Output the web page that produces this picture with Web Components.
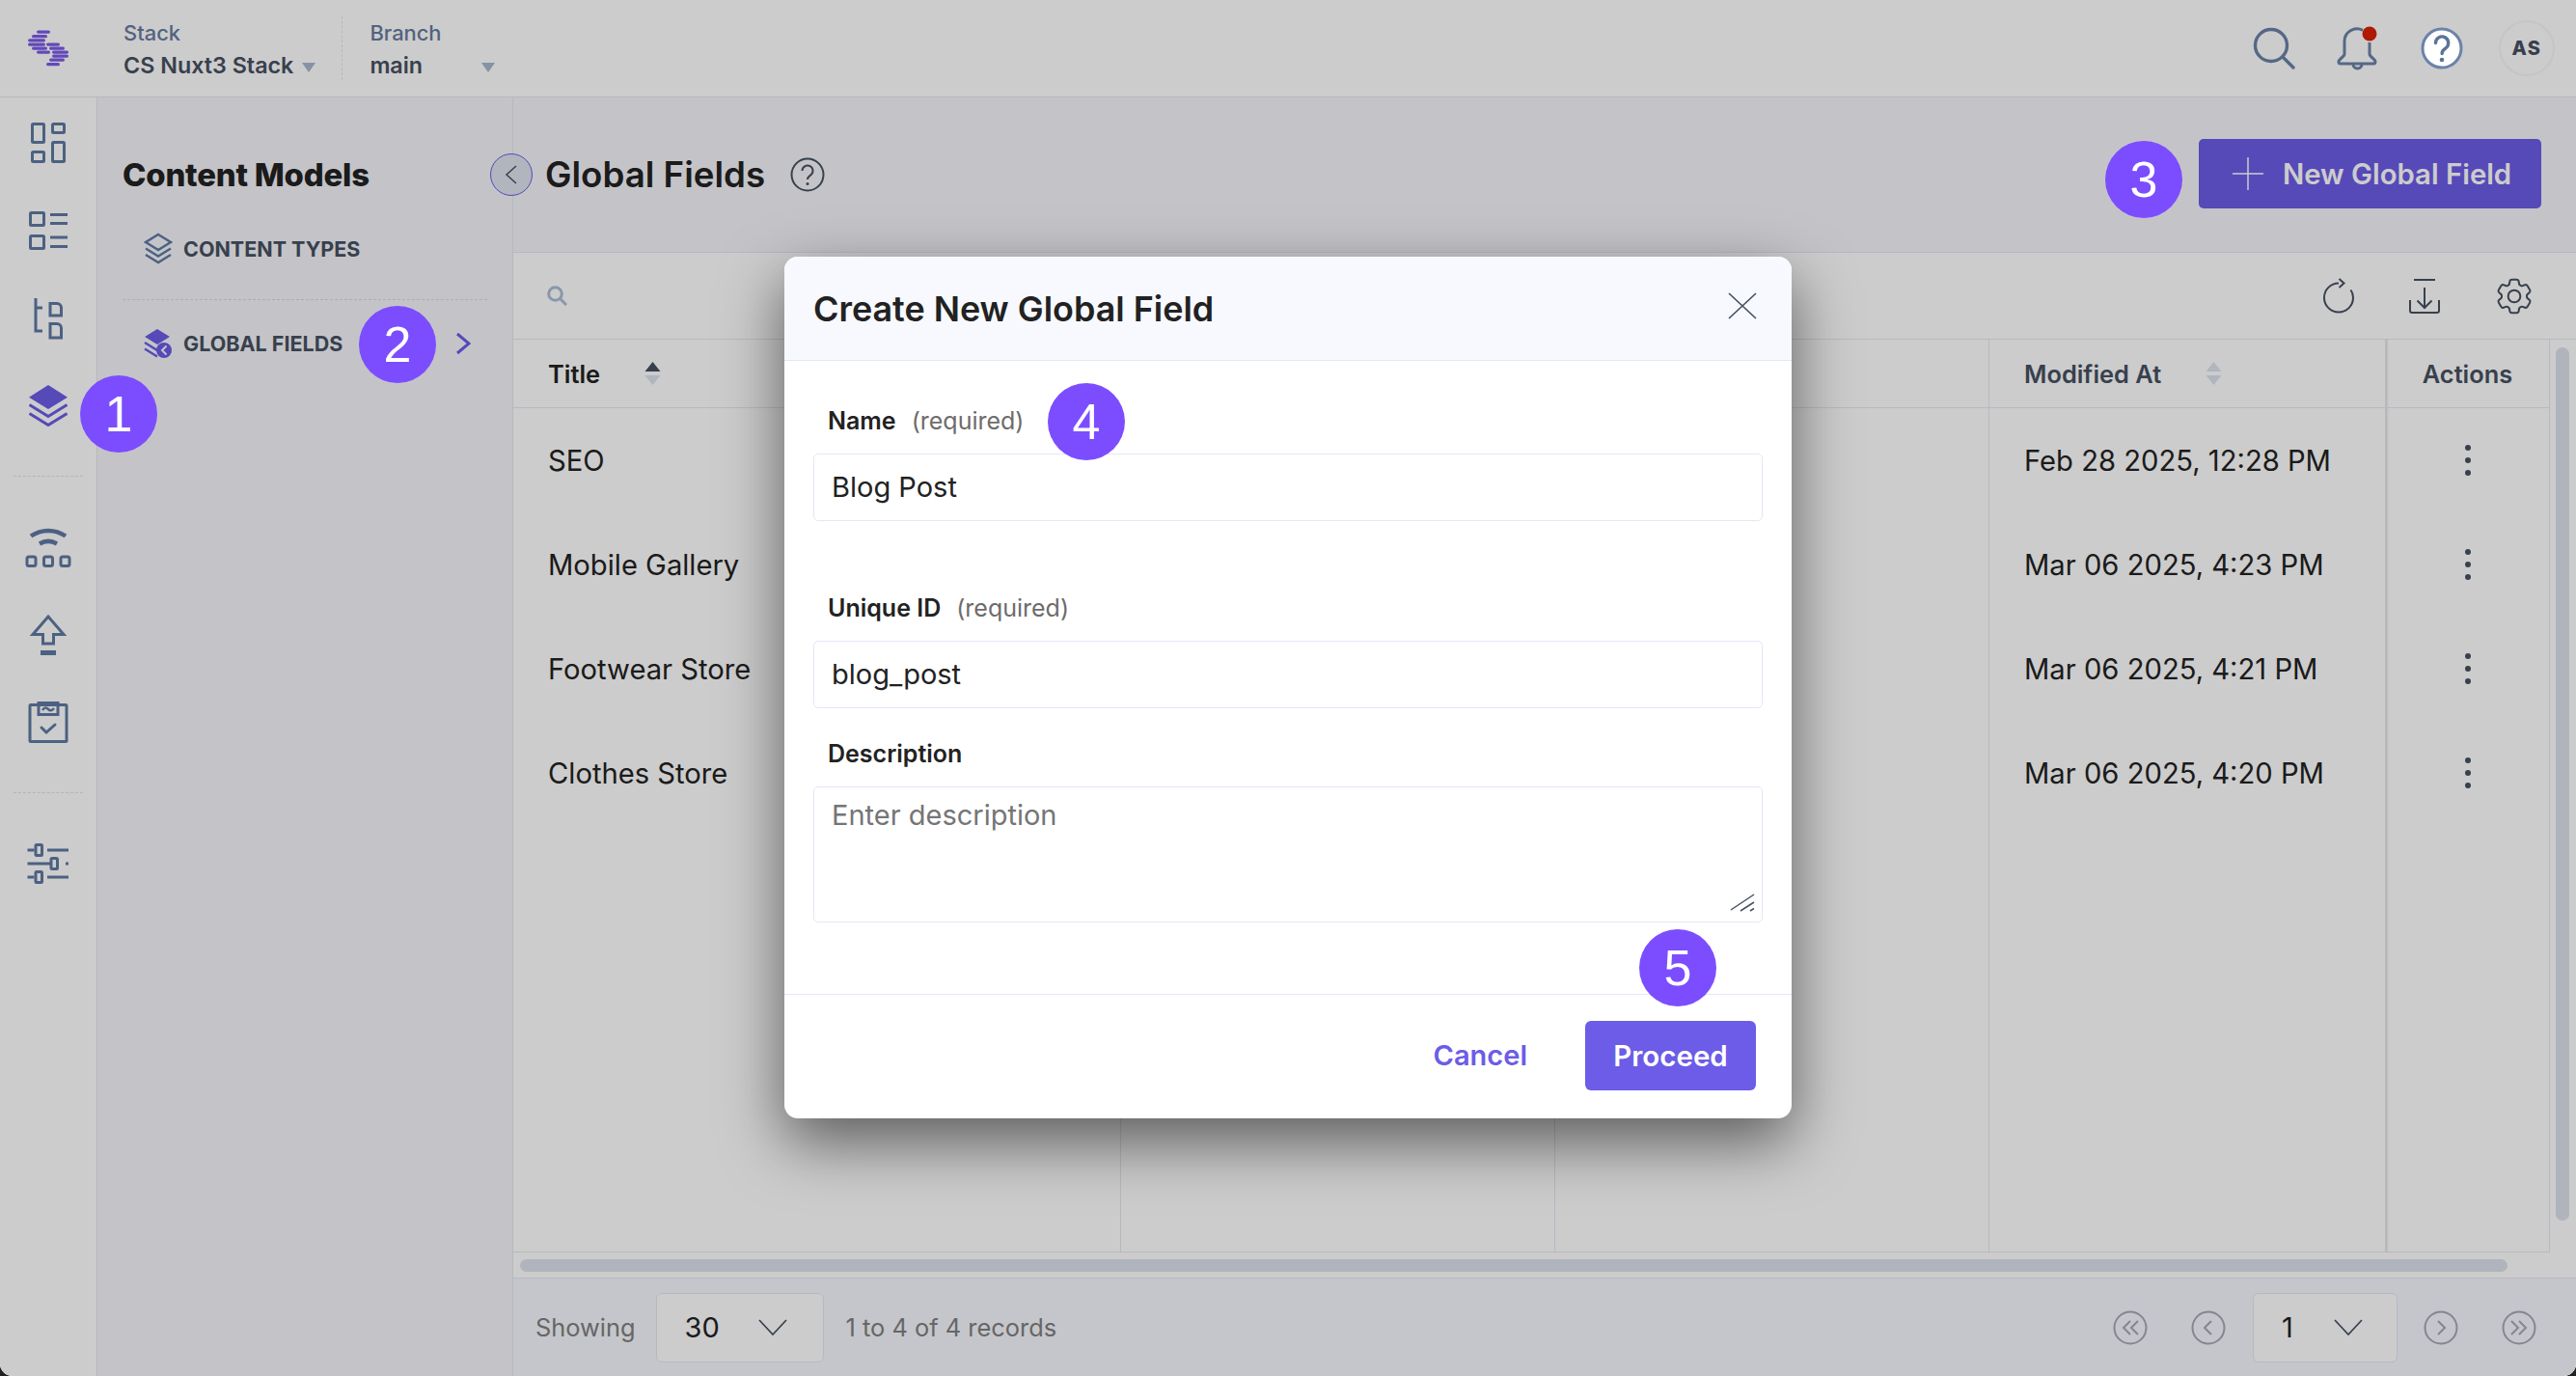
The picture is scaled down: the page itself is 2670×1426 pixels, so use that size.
<!DOCTYPE html>
<html lang="en">
<head>
<meta charset="utf-8">
<title>Global Fields</title>
<style>
  html, body { margin: 0; height: 100%; background: #222; overflow: hidden; }
  body { font-family: Inter, "Liberation Sans", sans-serif; }
</style>
</head>
<body>
<app-shell>
  <top-bar slot="top"></top-bar>
  <side-rail slot="rail"></side-rail>
  <models-panel slot="panel"></models-panel>
  <main-view slot="main">
    <page-header></page-header>
    <table-toolbar></table-toolbar>
    <data-table></data-table>
    <table-footer></table-footer>
  </main-view>
  <create-modal slot="modal">
    <form-field label="Name" hint="(required)" style="margin-top:47px">Blog Post</form-field>
    <form-field label="Unique ID" hint="(required)" style="margin-top:75px">blog_post</form-field>
    <form-field label="Description" area placeholder style="margin-top:32px">Enter description</form-field>
  </create-modal>
  <step-badge slot="badges" style="left:83px;top:389px">1</step-badge>
  <step-badge slot="badges" style="left:372px;top:317px">2</step-badge>
  <step-badge slot="badges" style="left:2182px;top:146px">3</step-badge>
  <step-badge slot="badges" style="left:1086px;top:397px">4</step-badge>
  <step-badge slot="badges" style="left:1699px;top:963px">5</step-badge>
</app-shell>

<script>
function fill(el, html) {
    const template = document.createElement('template');
    template.innerHTML = html;
    el.shadowRoot.innerHTML = '';
    el.shadowRoot.appendChild(template.content.cloneNode(true));
}

const GEAR = 'M9.594 3.94c.09-.542.56-.94 1.11-.94h2.593c.55 0 1.02.398 1.11.94l.213 1.281c.063.374.313.686.645.87.074.04.147.083.22.127.325.196.72.257 1.075.124l1.217-.456a1.125 1.125 0 0 1 1.37.49l1.296 2.247a1.125 1.125 0 0 1-.26 1.431l-1.003.827c-.293.241-.438.613-.43.992a7.723 7.723 0 0 1 0 .255c-.008.378.137.75.43.991l1.004.827c.424.35.534.955.26 1.43l-1.298 2.247a1.125 1.125 0 0 1-1.369.491l-1.217-.456c-.355-.133-.75-.072-1.076.124a6.47 6.47 0 0 1-.22.128c-.331.183-.581.495-.644.869l-.213 1.281c-.09.543-.56.94-1.11.94h-2.594c-.55 0-1.019-.398-1.11-.94l-.213-1.281c-.062-.374-.312-.686-.644-.87a6.52 6.52 0 0 1-.22-.127c-.325-.196-.72-.257-1.076-.124l-1.217.456a1.125 1.125 0 0 1-1.369-.49l-1.297-2.247a1.125 1.125 0 0 1 .26-1.431l1.004-.827c.292-.24.437-.613.43-.991a6.932 6.932 0 0 1 0-.255c.007-.38-.138-.751-.43-.992l-1.004-.827a1.125 1.125 0 0 1-.26-1.43l1.297-2.247a1.125 1.125 0 0 1 1.37-.491l1.216.456c.356.133.751.072 1.076-.124.072-.044.146-.086.22-.128.332-.183.582-.495.644-.869l.214-1.28Z';

class AppShell extends HTMLElement {
    constructor() {
        super();
        this.attachShadow({ mode: 'open' });
    }

    connectedCallback() {
        fill(this, `
            <style>
                :host {
                    display: grid;
                    grid-template-columns: 101px 431px 1fr;
                    grid-template-rows: 101px 1fr;
                    position: relative;
                    width: 100vw;
                    height: 100vh;
                    background: #fff;
                    border-radius: 0 0 13px 13px;
                    overflow: hidden;
                    color: #222;
                    font-family: Inter, "Liberation Sans", sans-serif;
                }
                .top { grid-column: 1 / 4; display: flex; min-width: 0; }
                .col { display: flex; min-width: 0; min-height: 0; }
            </style>
            <div class="top"><slot name="top"></slot></div>
            <div class="col"><slot name="rail"></slot></div>
            <div class="col"><slot name="panel"></slot></div>
            <div class="col"><slot name="main"></slot></div>
            <slot name="modal"></slot>
            <slot name="badges"></slot>
        `);
    }
}

class StepBadge extends HTMLElement {
    constructor() {
        super();
        this.attachShadow({ mode: 'open' });
    }

    connectedCallback() {
        fill(this, `
            <style>
                :host {
                    position: absolute;
                    z-index: 20;
                    display: flex;
                    align-items: center;
                    justify-content: center;
                    width: 80px;
                    height: 80px;
                    border-radius: 50%;
                    background: #7c4dff;
                    color: #fff;
                    font: 400 52px "Liberation Sans", Arial, sans-serif;
                }
            </style>
            <slot></slot>
        `);
    }
}

class TopBar extends HTMLElement {
    constructor() {
        super();
        this.attachShadow({ mode: 'open' });
    }

    connectedCallback() {
        const bars = [[38, 33, 14], [33, 37.6, 16], [29, 41.7, 18], [29, 46, 18], [48, 46, 14], [33, 50, 16], [51, 50, 16],
            [38, 54, 14], [54, 54, 17], [54, 58, 17], [51, 62, 16], [48, 66.5, 14]];
        fill(this, `
            <style>
                :host {
                    display: flex;
                    flex: 1;
                    align-items: center;
                    box-sizing: border-box;
                    height: 101px;
                    border-bottom: 1px solid #e3e8f1;
                    background: #fff;
                    font-family: Inter, "Liberation Sans", sans-serif;
                }
                .logo { width: 128px; height: 100px; flex: none; }
                .picker { display: flex; flex-direction: column; gap: 9px; padding-top: 3px; }
                .picker small { font-size: 21.9px; font-weight: 500; line-height: 24px; color: #677ba0; }
                .picker b { display: flex; align-items: center; font-size: 23.3px; font-weight: 600; line-height: 26px; color: #475161; }
                .caret { width: 0; height: 0; margin-top: 3px; border: 7px solid transparent; border-top: 10px solid #a9b8cd; border-bottom: 0; }
                .stack .caret { margin-left: 9px; }
                .branch b { width: 130px; justify-content: space-between; }
                .sep { width: 0; height: 66px; margin: 0 28px 0 27px; border-left: 1px dashed #e3e8f1; }
                .right { display: flex; align-items: center; margin-left: auto; padding-right: 22px; }
                .right svg { display: block; }
                .bell { position: relative; margin-left: 42px; }
                .help { position: relative; z-index: 20; margin-left: 44px; }
                .avatar {
                    display: flex; align-items: center; justify-content: center;
                    width: 54px; height: 54px; margin-left: 37px;
                    border: 2px solid #f6f7f9; border-radius: 50%;
                    font-size: 20px; font-weight: 800; letter-spacing: 1.5px; color: #475161;
                }
            </style>
            <svg class="logo" viewBox="0 0 128 100">
                ${bars.map(([x, y, w]) => `<rect x="${x}" y="${y - 1.5}" width="${w}" height="3.2" rx="1.6" fill="#7c5ce8"/>`).join('')}
            </svg>
            <div class="picker stack"><small>Stack</small><b>CS Nuxt3 Stack<span class="caret"></span></b></div>
            <div class="sep"></div>
            <div class="picker branch"><small>Branch</small><b>main<span class="caret"></span></b></div>
            <div class="right">
                <svg width="44" height="44" viewBox="0 0 44 44" fill="none" stroke="#6b83a8" stroke-width="3.4" stroke-linecap="round">
                    <circle cx="19" cy="19" r="16.5"/><path d="M31 31 42 42"/>
                </svg>
                <svg class="bell" width="44" height="46" viewBox="0 0 44 46" fill="none" stroke="#6b83a8" stroke-width="3">
                    <path d="M28 4.4A13 13 0 0 0 9 16v13c0 3-6 5-6 8 0 1.2 1 2 2 2h34c1 0 2-.8 2-2 0-3-6-5-6-8V17"/>
                    <path d="M18 39.5a4.5 4.5 0 0 0 9 0"/>
                    <circle cx="35" cy="8" r="7.5" fill="#dd2000" stroke="none"/>
                </svg>
                <svg class="help" width="44" height="44" viewBox="0 0 44 44">
                    <circle cx="22" cy="22" r="20" fill="#fff" stroke="#6b83a8" stroke-width="3"/>
                    <path d="M15.5 16.5a6.6 6.6 0 1 1 10.2 5.6c-2.4 1.5-3.6 2.8-3.6 5.4" fill="none" stroke="#5c7398" stroke-width="3.4" stroke-linecap="round"/>
                    <circle cx="22" cy="34" r="2.3" fill="#5c7398"/>
                </svg>
                <div class="avatar">AS</div>
            </div>
        `);
    }
}

class SideRail extends HTMLElement {
    constructor() {
        super();
        this.attachShadow({ mode: 'open' });
    }

    connectedCallback() {
        const icon = (body, active) => `<div class="item"><svg width="52" height="52" viewBox="0 0 52 52" fill="none" stroke="${active ? '#6c5ce7' : '#607aa3'}" stroke-width="3">${body}</svg></div>`;
        const slider = (y, x) => `<rect x="${x}" y="${y - 5.5}" width="6.5" height="11" rx="1"/>`;
        fill(this, `
            <style>
                :host {
                    display: flex;
                    flex-direction: column;
                    flex: 1;
                    box-sizing: border-box;
                    padding-top: 1px;
                    border-right: 1px solid #e3e8f1;
                    background: #fff;
                }
                .item { display: flex; align-items: center; justify-content: center; height: 91px; flex: none; }
                .gap { display: flex; align-items: center; justify-content: center; height: 55px; flex: none; }
                .gap i { width: 72px; border-top: 1px dashed #dfe3ea; }
                svg { display: block; }
            </style>
            ${icon(`<rect x="9.5" y="6.5" width="12" height="19" rx="1"/><rect x="30.5" y="6.5" width="12" height="9" rx="1"/><rect x="9.5" y="35.5" width="12" height="10" rx="1"/><rect x="30.5" y="25.5" width="12" height="20" rx="1"/>`)}
            ${icon(`<rect x="7.5" y="7.5" width="14" height="13" rx="1"/><rect x="7.5" y="31.5" width="14" height="13" rx="1"/><path d="M28 9.5h18M28 18.5h18M28 33h18M28 42.5h18"/>`)}
            ${icon(`<path d="M13 5v34h7M13 15h7"/><path d="M28 10.5h7a4.5 4.5 0 0 1 4.5 4.5v8H28zM28 31.5h7a4.5 4.5 0 0 1 4.5 4.5v10H28z"/>`)}
            ${icon(`<path d="M26 4 46 16.7 26 29 6 16.7Z" fill="#6c5ce7" stroke="none"/><path d="M6.5 24.5 26 36.5l19.5-12M6.5 33.5 26 45.5l19.5-12"/>`, true)}
            <div class="gap"><i></i></div>
            ${icon(`<path d="M8 14.5c11-7.5 25-7.5 36 0M17 22.500c6-3.500 12-3.500 18 0" stroke-width="4.500"/><rect x="4" y="36" width="9" height="9.500" rx="2"/><rect x="21.500" y="36" width="9" height="9.500" rx="2"/><rect x="39" y="36" width="9" height="9.500" rx="2"/>`)}
            ${icon(`<path d="M26 7 10 25.500h10.500V35h11v-9.500H42Z"/><rect x="18" y="42" width="16" height="5" fill="#607aa3" stroke="none"/>`)}
            ${icon(`<rect x="7" y="7.500" width="38" height="38" rx="1"/><path d="M16 5.500h20v12H16z"/><path d="M20 13c2-3 4-3 6-1s4 1.500 6-1" stroke-width="2.500"/><path d="M19 31l5 5 9-8" stroke-linecap="round"/>`)}
            <div class="gap"><i></i></div>
            ${icon(`<path d="M4.500 12h7M25 12h22M4.500 26h24M44 26h3M4.500 40h7M25 40h22"/>${slider(12, 13)}${slider(26, 29)}${slider(40, 13)}`)}
        `);
    }
}

class ModelsPanel extends HTMLElement {
    constructor() {
        super();
        this.attachShadow({ mode: 'open' });
    }

    connectedCallback() {
        fill(this, `
            <style>
                :host {
                    display: flex;
                    flex-direction: column;
                    flex: 1;
                    position: relative;
                    box-sizing: border-box;
                    padding: 60px 26px 0 26px;
                    border-right: 1px solid #e3e8f1;
                    background: #f5f6fb;
                    font-family: Inter, "Liberation Sans", sans-serif;
                }
                h2 { margin: 0; font-size: 32.9px; line-height: 40px; font-weight: 800; letter-spacing: -.2px; color: #222; }
                .row { display: flex; align-items: center; gap: 11px; box-sizing: border-box; padding-left: 22px; font-size: 21.5px; font-weight: 700; color: #475161; }
                .first { height: 110px; padding-top: 5px; border-bottom: 1px dashed #d6dae1; }
                .second { height: 90px; }
                .chev { position: absolute; left: 371px; top: 243px; }
                .collapse {
                    position: absolute; left: 407px; top: 58px; z-index: 1;
                    display: flex; align-items: center; justify-content: center;
                    box-sizing: border-box; width: 44px; height: 44px;
                    border: 1px solid #6c5ce7; border-radius: 50%; background: #dde3ee;
                }
                svg { display: block; flex: none; }
            </style>
            <h2>Content Models</h2>
            <div class="row first">
                <svg width="30" height="34" viewBox="0 0 30 34" fill="none" stroke="#607aa3" stroke-width="2.400">
                    <path d="M15 2 28 10 15 18 2 10Z"/><path d="M2 16.500 15 24.500 28 16.500M2 23 15 31 28 23"/>
                </svg>
                CONTENT TYPES
            </div>
            <div class="row second">
                <svg width="30" height="34" viewBox="0 0 30 34" fill="none" stroke="#6c5ce7" stroke-width="2.400">
                    <path d="M14 2 27 10 14 18 1 10Z" fill="#6c5ce7" stroke="none"/><path d="M1 16 14 24 19 21M1 22.500 14 30.500"/>
                    <circle cx="21" cy="24" r="8" fill="#6c5ce7" stroke="none"/><path d="M23.500 19.500 19 24l4.500 4.500" stroke="#f5f6fb" stroke-width="2"/>
                </svg>
                GLOBAL FIELDS
            </div>
            <svg class="chev" width="16" height="24" viewBox="0 0 16 24" fill="none" stroke="#6c5ce7" stroke-width="3"><path d="M2 2 14 12 2 22"/></svg>
            <div class="collapse">
                <svg width="14" height="20" viewBox="0 0 14 20" fill="none" stroke="#475161" stroke-width="1.500"><path d="M12 1 2 10l10 9"/></svg>
            </div>
        `);
    }
}

class MainView extends HTMLElement {
    constructor() {
        super();
        this.attachShadow({ mode: 'open' });
    }

    connectedCallback() {
        fill(this, `
            <style>
                :host { display: flex; flex-direction: column; flex: 1; min-width: 0; background: #fff; }
            </style>
            <slot></slot>
        `);
    }
}

class PageHeader extends HTMLElement {
    constructor() {
        super();
        this.attachShadow({ mode: 'open' });
    }

    connectedCallback() {
        fill(this, `
            <style>
                :host {
                    display: flex;
                    align-items: center;
                    box-sizing: border-box;
                    flex: none;
                    height: 161px;
                    padding: 0 36px 0 33px;
                    border-bottom: 1px solid #e3e8f1;
                    background: #f5f6fb;
                    font-family: Inter, "Liberation Sans", sans-serif;
                }
                h1 { margin: 0; font-size: 36.7px; line-height: 42px; font-weight: 600; color: #222; }
                .help { margin-left: 26px; }
                button {
                    display: flex; align-items: center; gap: 20px;
                    box-sizing: border-box; width: 355px; height: 72px; margin: 0 0 2px auto; padding: 0 0 0 35px;
                    border: 0; border-radius: 5px; background: #6c5ce7; color: #fff;
                    font: 600 29.3px Inter, "Liberation Sans", sans-serif;
                }
                svg { display: block; flex: none; }
            </style>
            <h1>Global Fields</h1>
            <svg class="help" width="36" height="36" viewBox="0 0 36 36" fill="none" stroke="#475161" stroke-width="2">
                <circle cx="18" cy="18" r="16.500"/><path d="M12.500 14a5.500 5.500 0 1 1 8.500 4.600c-2 1.300-3 2.300-3 4.400"/><circle cx="18" cy="27.500" r="1.500" fill="#475161" stroke="none"/>
            </svg>
            <button>
                <svg width="32" height="34" viewBox="0 0 32 34" stroke="#fff" stroke-width="1.500"><path d="M16 0v34M0 17h32"/></svg>
                New Global Field
            </button>
        `);
    }
}

class TableToolbar extends HTMLElement {
    constructor() {
        super();
        this.attachShadow({ mode: 'open' });
    }

    connectedCallback() {
        fill(this, `
            <style>
                :host {
                    display: flex;
                    align-items: center;
                    box-sizing: border-box;
                    flex: none;
                    height: 90px;
                    padding: 0 44px 0 35px;
                    border-bottom: 1px solid #e3e8f1;
                    background: #fff;
                }
                .right { display: flex; align-items: center; gap: 52px; margin-left: auto; }
                svg { display: block; flex: none; }
            </style>
            <svg width="21" height="21" viewBox="0 0 21 21" fill="none" stroke="#acbdd4" stroke-width="3"><circle cx="8.500" cy="8.500" r="6.800"/><path d="M13.500 13.500 20 20"/></svg>
            <div class="right">
                <svg width="36" height="38" viewBox="0 0 36 38" fill="none" stroke="#475161" stroke-width="2">
                    <path d="M17 5.500A15 15 0 1 0 32 20.500c0-3-1-6-2.500-8"/><path d="M17.500 1l5 4.500-5 4.500"/>
                </svg>
                <svg width="36" height="38" viewBox="0 0 36 38" fill="none" stroke="#475161" stroke-width="2">
                    <path d="M7 2h22M18 10v21M10.500 23.500 18 31l7.500-7.500M3 23v11c0 1 1 2 2 2h26c1 0 2-1 2-2V23"/>
                </svg>
                <svg width="46" height="46" viewBox="0 0 24 24" fill="none" stroke="#475161" stroke-width="1.050" style="margin-right:-3px">
                    <path d="${GEAR}"/><circle cx="12" cy="12" r="3.300"/>
                </svg>
            </div>
        `);
    }
}

class SortIcon extends HTMLElement {
    constructor() {
        super();
        this.attachShadow({ mode: 'open' });
    }

    connectedCallback() {
        const up = this.hasAttribute('active') ? '#475161' : '#dde3ee';
        fill(this, `
            <style>
                :host { display: inline-block; width: 17px; height: 26px; }
                svg { display: block; }
            </style>
            <svg width="17" height="26" viewBox="0 0 17 26"><path d="M8.500 1 16.500 11H.5Z" fill="${up}"/><path d="M8.500 25 .5 15h16Z" fill="#dde3ee"/></svg>
        `);
    }
}

class DataTable extends HTMLElement {
    constructor() {
        super();
        this.attachShadow({ mode: 'open' });
    }

    connectedCallback() {
        const rows = [
            ['SEO', 'Feb 28 2025, 12:28 PM'],
            ['Mobile Gallery', 'Mar 06 2025, 4:23 PM'],
            ['Footwear Store', 'Mar 06 2025, 4:21 PM'],
            ['Clothes Store', 'Mar 06 2025, 4:20 PM']
        ];
        const kebab = '<svg width="8" height="34" viewBox="0 0 8 34" fill="#475161"><circle cx="4" cy="4" r="3"/><circle cx="4" cy="17" r="3"/><circle cx="4" cy="30" r="3"/></svg>';
        fill(this, `
            <style>
                :host {
                    display: flex;
                    flex-direction: column;
                    flex: 1;
                    min-height: 0;
                    position: relative;
                    background: #fff;
                    font-family: Inter, "Liberation Sans", sans-serif;
                }
                .wrap { flex: 1; min-height: 0; display: flex; }
                table { width: 2110px; height: 946px; border-collapse: separate; border-spacing: 0; table-layout: fixed; font-size: 29.2px; color: #222; border-right: 1px solid #e3e8f1; border-bottom: 1px solid #e3e8f1; }
                th { height: 70px; padding: 0 0 0 36px; border-bottom: 1px solid #e3e8f1; text-align: left; font-size: 25.4px; font-weight: 600; }
                td { height: 108px; padding: 0 0 0 36px; font-weight: 400; }
                th + th, td + td { border-left: 1px solid #e3e8f1; }
                .filler td { height: auto; }
                .mod { color: #475161; }
                .actions { padding: 0; text-align: center; color: #475161; background: linear-gradient(to right, rgba(0, 0, 0, .12), transparent 3px); }
                .actions svg { display: block; margin: 0 auto; }
                .label { display: flex; align-items: center; }
                sort-icon { margin-left: 46px; }
                .v { position: absolute; left: 2117px; top: 8px; width: 14px; height: 905px; border-radius: 7px; background: #dce1ec; }
                .hbar { flex: none; height: 26px; box-sizing: border-box; padding-top: 7px; }
                .hbar i { display: block; width: 2060px; height: 13px; margin-left: 7px; border-radius: 7px; background: #dce1ec; }
            </style>
            <div class="wrap">
            <table>
                <colgroup><col style="width:629px"><col style="width:450px"><col style="width:450px"><col style="width:411px"><col style="width:170px"></colgroup>
                <thead><tr>
                    <th><span class="label">Title<sort-icon active></sort-icon></span></th>
                    <th></th><th></th>
                    <th class="mod"><span class="label">Modified At<sort-icon></sort-icon></span></th>
                    <th class="actions">Actions</th>
                </tr></thead>
                <tbody>
                    ${rows.map(([name, date]) => `<tr><td>${name}</td><td></td><td></td><td>${date}</td><td class="actions">${kebab}</td></tr>`).join('')}
                    <tr class="filler"><td></td><td></td><td></td><td></td><td class="actions"></td></tr>
                </tbody>
            </table>
            </div>
            <div class="v"></div>
            <div class="hbar"><i></i></div>
        `);
    }
}

class TableFooter extends HTMLElement {
    constructor() {
        super();
        this.attachShadow({ mode: 'open' });
    }

    connectedCallback() {
        const nav = (d) => `<svg class="nav" width="36" height="36" viewBox="0 0 36 36" fill="none" stroke="#a5a8b5" stroke-width="2"><circle cx="18" cy="18" r="16.500"/><path d="${d}"/></svg>`;
        const select = (value, width, gap) => `<div class="select" style="width:${width}px"><span>${value}</span><svg width="30" height="17" viewBox="0 0 30 17" fill="none" stroke="#475161" stroke-width="1.700" style="margin-left:${gap}px"><path d="M1 1 15 16 29 1"/></svg></div>`;
        fill(this, `
            <style>
                :host {
                    display: flex;
                    align-items: center;
                    box-sizing: border-box;
                    flex: none;
                    height: 102px;
                    padding: 0 41px 0 23px;
                    border-top: 1px solid #e3e8f1;
                    background: #f7f8fe;
                    font: 400 25.4px Inter, "Liberation Sans", sans-serif;
                    color: #808080;
                }
                .select {
                    display: flex; align-items: center; box-sizing: border-box; height: 72px; padding-left: 29px;
                    border: 1px solid #e3e8f1; border-radius: 6px; background: #fff; font-size: 29px; color: #222;
                }
                .shown { margin: 0 23px 0 21px; }
                .right { display: flex; align-items: center; margin-left: auto; }
                .nav { display: block; }
                .nav + .nav { margin-left: 45px; }
                .right .select { margin: 0 27px 0 28px; }
                .last { margin-left: 45px; }
            </style>
            <span>Showing</span>
            <span class="shown">${select('30', 174, 40)}</span>
            <span>1 to 4 of 4 records</span>
            <div class="right">
                ${nav('M18 11l-7 7 7 7M26 11l-7 7 7 7')}
                ${nav('M21 11l-7 7 7 7')}
                ${select('1', 150, 42)}
                ${nav('M15 11l7 7-7 7')}
                <span class="last">${nav('M10 11l7 7-7 7M18 11l7 7-7 7')}</span>
            </div>
        `);
    }
}

class FormField extends HTMLElement {
    constructor() {
        super();
        this.attachShadow({ mode: 'open' });
    }

    connectedCallback() {
        const area = this.hasAttribute('area');
        const hint = this.getAttribute('hint');
        fill(this, `
            <style>
                :host { display: block; font-family: Inter, "Liberation Sans", sans-serif; }
                label { display: flex; gap: 16px; padding-left: 15px; margin-bottom: 19px; font-size: 25px; line-height: 30px; font-weight: 600; color: #222; }
                em { font-style: normal; font-weight: 400; color: #6e6b6b; }
                .box {
                    position: relative; box-sizing: border-box; height: ${area ? 141 : 70}px;
                    padding: ${area ? '11px' : '0'} 20px 0 18px;
                    display: flex; align-items: ${area ? 'flex-start' : 'center'};
                    border: 1px solid #e3e8f5; border-radius: 5px; background: #fff;
                    font-size: 29px; line-height: 36px; color: ${this.hasAttribute('placeholder') ? '#757575' : '#222'};
                }
                .grip { position: absolute; right: 7px; bottom: 9px; }
            </style>
            <label>${this.getAttribute('label')}${hint ? `<em>${hint}</em>` : ''}</label>
            <div class="box"><slot></slot>${area ? '<svg class="grip" width="26" height="20" viewBox="0 0 26 20" stroke="#475161" stroke-width="1.500"><path d="M1 17 25 1M11 18 25 9M21 18l4-2.500"/></svg>' : ''}</div>
        `);
    }
}

class CreateModal extends HTMLElement {
    constructor() {
        super();
        this.attachShadow({ mode: 'open' });
    }

    connectedCallback() {
        fill(this, `
            <style>
                :host {
                    position: absolute;
                    inset: 0;
                    z-index: 10;
                    background: rgba(0, 0, 0, .2);
                    font-family: Inter, "Liberation Sans", sans-serif;
                }
                .dialog {
                    display: flex;
                    flex-direction: column;
                    box-sizing: border-box;
                    width: 1044px;
                    height: 893px;
                    margin: 266px 0 0 813px;
                    border-radius: 14px;
                    background: #fff;
                    box-shadow: 0 24px 64px rgba(0, 0, 0, .55);
                    overflow: hidden;
                }
                header {
                    display: flex; align-items: center; justify-content: space-between; flex: none;
                    box-sizing: border-box; height: 108px; padding: 0 36px 0 30px;
                    border-bottom: 1px solid #e3e8f5; background: #f7f9fe;
                }
                h3 { margin: 0; font-size: 35.9px; line-height: 42px; font-weight: 600; color: #222; }
                header svg { margin-bottom: 6px; }
                .body { flex: 1; padding: 0 30px; }
                footer {
                    display: flex; align-items: center; justify-content: flex-end; gap: 60px; flex: none;
                    box-sizing: border-box; height: 129px; padding: 0 37px 3px 0; border-top: 1px solid #e3e8f5;
                }
                .cancel { font-size: 29px; font-weight: 600; color: #6c5ce7; }
                .proceed {
                    width: 177px; height: 72px; border: 0; border-radius: 6px; background: #6c5ce7; color: #fff;
                    font: 600 29.5px Inter, "Liberation Sans", sans-serif;
                }
            </style>
            <div class="dialog">
                <header>
                    <h3>Create New Global Field</h3>
                    <svg width="30" height="28" viewBox="0 0 30 28" fill="none" stroke="#475161" stroke-width="1.700"><path d="M1 1 29 27M29 1 1 27"/></svg>
                </header>
                <div class="body"><slot></slot></div>
                <footer>
                    <span class="cancel">Cancel</span>
                    <button class="proceed">Proceed</button>
                </footer>
            </div>
        `);
    }
}

customElements.define('app-shell', AppShell);
customElements.define('step-badge', StepBadge);
customElements.define('top-bar', TopBar);
customElements.define('side-rail', SideRail);
customElements.define('models-panel', ModelsPanel);
customElements.define('main-view', MainView);
customElements.define('page-header', PageHeader);
customElements.define('table-toolbar', TableToolbar);
customElements.define('sort-icon', SortIcon);
customElements.define('data-table', DataTable);
customElements.define('table-footer', TableFooter);
customElements.define('form-field', FormField);
customElements.define('create-modal', CreateModal);
</script>
</body>
</html>
